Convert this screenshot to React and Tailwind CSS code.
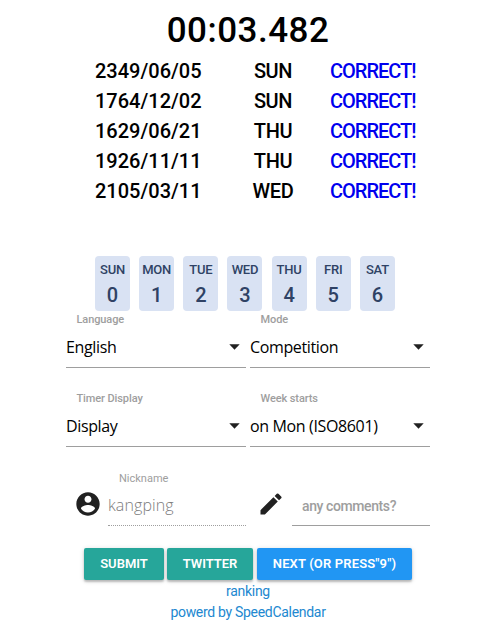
const results = [
  ['2349/06/05', 'SUN'],
  ['1764/12/02', 'SUN'],
  ['1629/06/21', 'THU'],
  ['1926/11/11', 'THU'],
  ['2105/03/11', 'WED'],
];

const days = ['SUN', 'MON', 'TUE', 'WED', 'THU', 'FRI', 'SAT'];

function Select({ label, value }) {
  return (
    <div className="h-[55px] border-b border-[#9e9e9e]">
      <div className="h-[14px] pl-[10.5px] text-[11px] leading-[14px] font-medium tracking-[-0.1px] text-[#9e9e9e]">{label}</div>
      <div className="flex h-[39px] items-center justify-between pr-[6.5px] font-['Open_Sans',sans-serif] text-[16px] tracking-[-0.36px] text-black">
        <span>{value}</span>
        <svg width="11" height="6" viewBox="0 0 11 6" className="fill-[#212121]">
          <path d="M0.3 0.3h10.4l-5.2 5.5z" />
        </svg>
      </div>
    </div>
  );
}

function Button({ className, children }) {
  return (
    <button
      className={`h-8 rounded-[2px] text-center text-[13px] leading-8 font-semibold whitespace-nowrap text-white shadow-[0_2px_2px_rgba(0,0,0,0.2),0_1px_5px_rgba(0,0,0,0.16)] ${className}`}
    >
      {children}
    </button>
  );
}

export default function App() {
  return (
    <main className="h-[628px] w-[496px] overflow-hidden bg-white font-[Roboto,sans-serif] text-black">
      <h1 className="h-[56px] pt-[10px] text-center text-[35px] leading-[42px] font-medium tracking-[0.5px]">00:03.482</h1>

      <div className="ml-[95px] h-[200px] w-[322px] text-[20px] leading-[30px]">
        {results.map(([date, day]) => (
          <div key={date} className="grid h-[30px] grid-cols-[121px_114px_87px] font-medium">
            <span>{date}</span>
            <span className="text-center tracking-[-0.4px]">{day}</span>
            <span className="tracking-[-1px] text-[#0000ee]">CORRECT!</span>
          </div>
        ))}
      </div>

      <div className="ml-[95px] flex h-[55px] w-[300px] justify-between">
        {days.map((day, i) => (
          <div key={day} className="w-[35px] rounded-[4px] bg-[#d9e2f3] pt-[4px] text-center font-medium text-[#2f4265]">
            <div className="text-[13px] leading-[20px] tracking-[-0.2px]">{day}</div>
            <div className="text-[20px] leading-[30px]">{i}</div>
          </div>
        ))}
      </div>

      <div className="ml-[66px] grid w-[364px] grid-cols-2 gap-x-[4px] gap-y-[24px] pt-[2px]">
        <Select label="Language" value="English" />
        <Select label="Mode" value="Competition" />
        <Select label="Timer Display" value="Display" />
        <Select label="Week starts" value="on Mon (ISO8601)" />
      </div>

      <div className="ml-[66px] flex h-[79px] w-[364px] items-end">
        <div className="flex h-[55px] w-[42px] items-end pb-[8px] pl-[8px]">
          <svg width="28" height="28" viewBox="0 0 24 24" className="fill-[#212121]">
            <path d="M12 2C6.48 2 2 6.48 2 12s4.48 10 10 10 10-4.48 10-10S17.52 2 12 2zm0 3c1.66 0 3 1.34 3 3s-1.34 3-3 3-3-1.34-3-3 1.34-3 3-3zm0 14.2c-2.5 0-4.71-1.28-6-3.22.03-1.99 4-3.08 6-3.08 1.99 0 5.97 1.09 6 3.08-1.29 1.94-3.5 3.22-6 3.22z" />
          </svg>
        </div>
        <div className="h-[55px] w-[138px] border-b border-dotted border-[#9e9e9e]">
          <div className="h-[14px] pt-px pl-[11px] text-[11px] leading-[14px] text-[#9e9e9e]">Nickname</div>
          <div className="font-['Open_Sans',sans-serif] text-[16px] leading-[40px] font-light tracking-[0.1px] text-[#7c7c7c]">kangping</div>
        </div>
        <div className="flex h-[55px] w-[46px] items-end pb-[8px] pl-[10.5px]">
          <svg width="28" height="28" viewBox="0 0 24 24" className="fill-[#212121]">
            <path d="M3 17.25V21h3.75L17.81 9.94l-3.75-3.75L3 17.25zM20.71 7.04a.996.996 0 0 0 0-1.41l-2.34-2.34a.996.996 0 0 0-1.41 0l-1.83 1.83 3.75 3.75 1.83-1.83z" />
          </svg>
        </div>
        <div className="h-[55px] w-[138px] border-b border-[#9e9e9e] pt-[25px] pl-[10px] text-[14px] leading-[20px] font-medium tracking-[-0.4px] whitespace-nowrap text-[#9e9e9e]">any comments?</div>
      </div>

      <div className="flex h-[55px] gap-[3px] pt-[22px] pl-[84px]">
        <Button className="w-[80px] bg-[#26a69a]">SUBMIT</Button>
        <Button className="w-[86px] bg-[#26a69a]">TWITTER</Button>
        <Button className="ml-[1px] w-[155px] bg-[#2196f3] tracking-[0.15px]">NEXT (OR PRESS"9")</Button>
      </div>

      <nav className="flex flex-col items-center text-[14px] leading-[21px] tracking-[-0.3px] text-[#2288d0]">
        <a>ranking</a>
        <a>powerd by SpeedCalendar</a>
      </nav>
    </main>
  );
}
